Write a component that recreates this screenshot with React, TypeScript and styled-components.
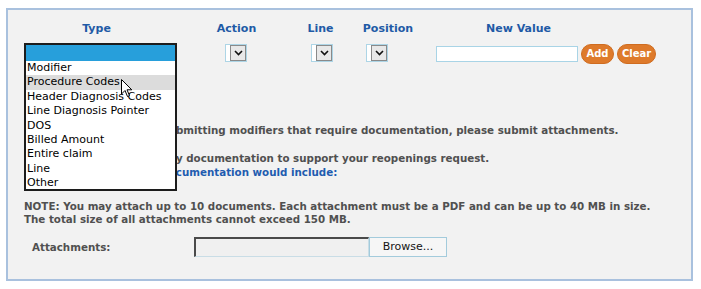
import React from 'react';
import styled, { createGlobalStyle } from 'styled-components';

const GlobalStyle = createGlobalStyle`
  html, body { margin: 0; padding: 0; background: #ffffff; }
  body { font-family: "DejaVu Sans", Verdana, sans-serif; }
`;

const Page = styled.div`
  padding: 8px 0 0 6px;
`;

const Panel = styled.section`
  box-sizing: border-box;
  width: 687px;
  height: 273px;
  border: 2px solid #a9c1de;
  background: #f2f2f2;
  padding: 12px 0 0 16px;
`;

const EditGrid = styled.div`
  display: grid;
  grid-template-columns: 145px 135px 33px 102px 159px;
  grid-template-rows: 14px 20px;
  row-gap: 8px;
`;

const HeadCell = styled.div`
  font: bold 11px/14px "DejaVu Sans", Verdana, sans-serif;
  color: #1f5aa6;
  text-align: center;
  white-space: nowrap;
`;

const CtrlCell = styled.div<{ $indent: number }>`
  display: flex;
  align-items: flex-start;
  gap: 3px;
  margin-left: ${(p) => p.$indent}px;
  position: relative;
  white-space: nowrap;
  & > * { flex-shrink: 0; }
`;

const TypeSelect = styled.div`
  box-sizing: border-box;
  width: 153px;
  height: 18px;
  border: 1px solid #add5e6;
  background: #fff;
`;

const ListBox = styled.ul`
  position: absolute;
  z-index: 5;
  left: 0;
  top: -1px;
  box-sizing: border-box;
  width: 153px;
  height: 148px;
  margin: 0;
  padding: 0;
  list-style: none;
  background: #ffffff;
  border: 2px solid #1c1c1c;
  font: 11px/14.4px "DejaVu Sans", Verdana, sans-serif;
  color: #000;
`;

const ListItem = styled.li<{ $state?: 'selected' | 'hover' }>`
  height: ${(p) => (p.$state === 'selected' ? '16px' : '14.4px')};
  padding-left: 1px;
  background: ${(p) =>
    p.$state === 'selected' ? '#279fdb' : p.$state === 'hover' ? '#dcdcdc' : 'transparent'};
  white-space: nowrap;
`;

const Cursor = styled.svg`
  position: absolute;
  left: 95px;
  top: 34px;
`;

const MiniSelect = styled.div`
  box-sizing: border-box;
  width: 22px;
  height: 18px;
  border: 1px solid #add5e6;
  background: #fff;
  display: flex;
  justify-content: flex-end;
`;

const MiniArrow = styled.span`
  box-sizing: border-box;
  width: 16px;
  height: 16px;
  background: #e8e8e8;
  border: 1px solid #8a8a8a;
  display: flex;
  align-items: center;
  justify-content: center;
`;

const ValueInput = styled.div`
  box-sizing: border-box;
  width: 142px;
  height: 16px;
  margin-top: 2px;
  border: 1px solid #a9d4e6;
  background: #fff;
`;

const PillButton = styled.button<{ $w: number }>`
  box-sizing: border-box;
  width: ${(p) => p.$w}px;
  height: 20px;
  padding: 0;
  border: 1px solid #cf6c20;
  border-radius: 10px;
  background: #de7a2b;
  color: #ffffff;
  font: bold 10px/18px "DejaVu Sans", Verdana, sans-serif;
  text-align: center;
`;

const Body = styled.div`
  font: bold 10.3px/13px "DejaVu Sans", Verdana, sans-serif;
  color: #505050;
`;

const Para = styled.p<{ $top: number; $lh?: number }>`
  margin: ${(p) => p.$top}px 0 0;
  line-height: ${(p) => p.$lh ?? 13}px;
  white-space: nowrap;
`;

const Emph = styled.span`
  color: #1f5cb0;
`;

const AttachRow = styled.div`
  display: flex;
  align-items: center;
  margin-top: 11px;
`;

const AttachLabel = styled.span`
  box-sizing: border-box;
  width: 170px;
  padding-left: 8px;
`;

const FileBox = styled.div`
  box-sizing: border-box;
  width: 175px;
  height: 20px;
  background: #f0f0f0;
  border-style: solid;
  border-width: 2px 1px 1px 2px;
  border-color: #4a4a4a #c9dde6 #c9dde6 #4a4a4a;
`;

const BrowseButton = styled.button`
  box-sizing: border-box;
  width: 78px;
  height: 20px;
  padding: 0;
  background: #f6f6f6;
  border: 1px solid #a3cbdc;
  color: #141414;
  font: 11px/18px "DejaVu Sans", Verdana, sans-serif;
`;

const Chevron = () => (
  <svg width="9" height="6" viewBox="0 0 9 6">
    <path d="M1 1 L4.5 4.5 L8 1" fill="none" stroke="#111" strokeWidth="1.6" />
  </svg>
);

const types = [
  'Modifier',
  'Procedure Codes',
  'Header Diagnosis Codes',
  'Line Diagnosis Pointer',
  'DOS',
  'Billed Amount',
  'Entire claim',
  'Line',
  'Other',
];

export default function App() {
  return (
    <>
      <GlobalStyle />
      <Page>
        <Panel>
          <EditGrid>
            <HeadCell>Type</HeadCell>
            <HeadCell>Action</HeadCell>
            <HeadCell>Line</HeadCell>
            <HeadCell>Position</HeadCell>
            <HeadCell>New Value</HeadCell>

            <CtrlCell $indent={0}>
              <TypeSelect />
              <ListBox>
                <ListItem $state="selected">&nbsp;</ListItem>
                {types.map((t) => (
                  <ListItem key={t} $state={t === 'Procedure Codes' ? 'hover' : undefined}>
                    {t}
                  </ListItem>
                ))}
                <Cursor width="12" height="19" viewBox="0 0 12 19">
                  <path
                    d="M0.5 0.5 L0.5 15 L4 11.5 L6.5 17.5 L8.5 16.6 L6 10.8 L10.8 10.8 Z"
                    fill="#ffffff"
                    stroke="#000"
                    strokeWidth="1"
                  />
                </Cursor>
              </ListBox>
            </CtrlCell>
            <CtrlCell $indent={56}>
              <MiniSelect>
                <MiniArrow>
                  <Chevron />
                </MiniArrow>
              </MiniSelect>
            </CtrlCell>
            <CtrlCell $indent={7}>
              <MiniSelect>
                <MiniArrow>
                  <Chevron />
                </MiniArrow>
              </MiniSelect>
            </CtrlCell>
            <CtrlCell $indent={29}>
              <MiniSelect>
                <MiniArrow>
                  <Chevron />
                </MiniArrow>
              </MiniSelect>
            </CtrlCell>
            <CtrlCell $indent={-3}>
              <ValueInput />
              <PillButton $w={33}>Add</PillButton>
              <PillButton $w={39}>Clear</PillButton>
            </CtrlCell>
          </EditGrid>

          <Body>
            <Para $top={59.5}>
              Please note:&nbsp; If you are submitting modifiers that require documentation, please submit attachments.
            </Para>
            <Para $top={15.5} $lh={13.5}>
              Providers could submit any documentation to support your reopenings request.
              <br />
              <Emph>Examples of applicable documentation would include:</Emph>
            </Para>
            <Para $top={21}>
              NOTE: You may attach up to 10 documents. Each attachment must be a PDF and can be up to 40 MB in size.
              <br />
              The total size of all attachments cannot exceed 150 MB.
            </Para>
            <AttachRow>
              <AttachLabel>Attachments:</AttachLabel>
              <FileBox />
              <BrowseButton>Browse...</BrowseButton>
            </AttachRow>
          </Body>
        </Panel>
      </Page>
    </>
  );
}
